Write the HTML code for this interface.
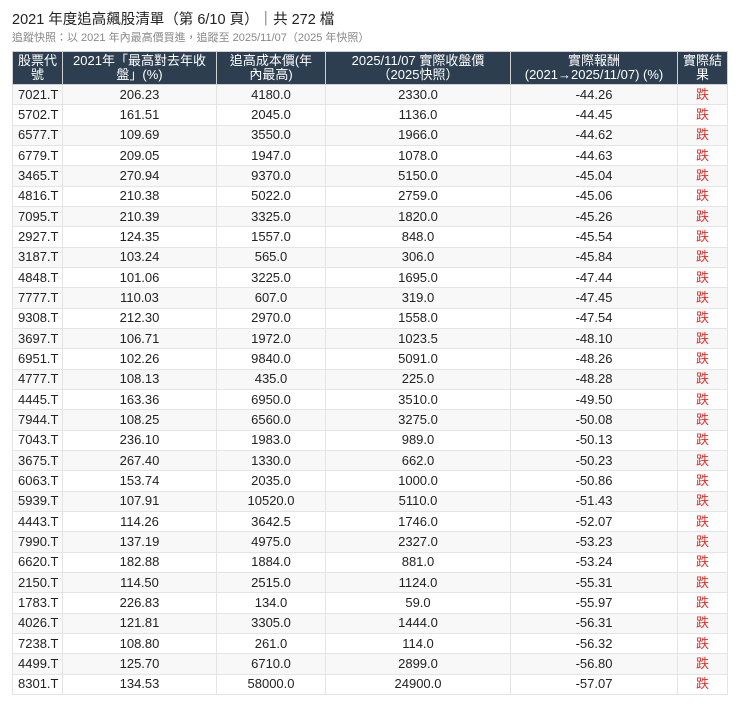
<html><head><style>
body{margin:0;background:#fff;font-family:"Liberation Sans","Noto Sans CJK TC",sans-serif;color:#222}
h1{position:absolute;left:12px;top:8px;margin:0;font-size:14.5px;font-weight:normal;color:#222}
.sub{position:absolute;left:12px;top:29px;font-size:11px;color:#888}
table{position:absolute;left:12px;top:51px;border-collapse:collapse;width:715px;table-layout:fixed;font-size:13px}
th{background:#2c3e50;color:#fff;font-weight:normal;height:33px;line-height:14px;padding:0 8px;border:1px solid #d0d0d0;font-size:13px}
tr{height:20.33px}
td{padding:0;border:1px solid #e4e4e4;text-align:center;line-height:14px}
td:first-child{text-align:left;padding-left:5px}
tr:nth-child(even) td{background:#f8f8f8}
td.r{color:#e0302a}
</style></head><body>
<h1>2021 年度追高飆股清單（第 6/10 頁）｜共 272 檔</h1>
<div class="sub">追蹤快照：以 2021 年內最高價買進，追蹤至 2025/11/07（2025 年快照）</div>
<table>
<colgroup><col style="width:50px"><col style="width:154px"><col style="width:109px"><col style="width:185px"><col style="width:167px"><col style="width:50px"></colgroup>
<tr style="height:33px"><th style="padding:0 4px">股票代號</th><th>2021年「最高對去年收盤」(%)</th><th>追高成本價(年內最高)</th><th>2025/11/07 實際收盤價（2025快照）</th><th>實際報酬<br>(2021→2025/11/07) (%)</th><th style="padding:0 4px">實際結果</th></tr>
<tr><td>7021.T</td><td>206.23</td><td>4180.0</td><td>2330.0</td><td>-44.26</td><td class="r">跌</td></tr>
<tr><td>5702.T</td><td>161.51</td><td>2045.0</td><td>1136.0</td><td>-44.45</td><td class="r">跌</td></tr>
<tr><td>6577.T</td><td>109.69</td><td>3550.0</td><td>1966.0</td><td>-44.62</td><td class="r">跌</td></tr>
<tr><td>6779.T</td><td>209.05</td><td>1947.0</td><td>1078.0</td><td>-44.63</td><td class="r">跌</td></tr>
<tr><td>3465.T</td><td>270.94</td><td>9370.0</td><td>5150.0</td><td>-45.04</td><td class="r">跌</td></tr>
<tr><td>4816.T</td><td>210.38</td><td>5022.0</td><td>2759.0</td><td>-45.06</td><td class="r">跌</td></tr>
<tr><td>7095.T</td><td>210.39</td><td>3325.0</td><td>1820.0</td><td>-45.26</td><td class="r">跌</td></tr>
<tr><td>2927.T</td><td>124.35</td><td>1557.0</td><td>848.0</td><td>-45.54</td><td class="r">跌</td></tr>
<tr><td>3187.T</td><td>103.24</td><td>565.0</td><td>306.0</td><td>-45.84</td><td class="r">跌</td></tr>
<tr><td>4848.T</td><td>101.06</td><td>3225.0</td><td>1695.0</td><td>-47.44</td><td class="r">跌</td></tr>
<tr><td>7777.T</td><td>110.03</td><td>607.0</td><td>319.0</td><td>-47.45</td><td class="r">跌</td></tr>
<tr><td>9308.T</td><td>212.30</td><td>2970.0</td><td>1558.0</td><td>-47.54</td><td class="r">跌</td></tr>
<tr><td>3697.T</td><td>106.71</td><td>1972.0</td><td>1023.5</td><td>-48.10</td><td class="r">跌</td></tr>
<tr><td>6951.T</td><td>102.26</td><td>9840.0</td><td>5091.0</td><td>-48.26</td><td class="r">跌</td></tr>
<tr><td>4777.T</td><td>108.13</td><td>435.0</td><td>225.0</td><td>-48.28</td><td class="r">跌</td></tr>
<tr><td>4445.T</td><td>163.36</td><td>6950.0</td><td>3510.0</td><td>-49.50</td><td class="r">跌</td></tr>
<tr><td>7944.T</td><td>108.25</td><td>6560.0</td><td>3275.0</td><td>-50.08</td><td class="r">跌</td></tr>
<tr><td>7043.T</td><td>236.10</td><td>1983.0</td><td>989.0</td><td>-50.13</td><td class="r">跌</td></tr>
<tr><td>3675.T</td><td>267.40</td><td>1330.0</td><td>662.0</td><td>-50.23</td><td class="r">跌</td></tr>
<tr><td>6063.T</td><td>153.74</td><td>2035.0</td><td>1000.0</td><td>-50.86</td><td class="r">跌</td></tr>
<tr><td>5939.T</td><td>107.91</td><td>10520.0</td><td>5110.0</td><td>-51.43</td><td class="r">跌</td></tr>
<tr><td>4443.T</td><td>114.26</td><td>3642.5</td><td>1746.0</td><td>-52.07</td><td class="r">跌</td></tr>
<tr><td>7990.T</td><td>137.19</td><td>4975.0</td><td>2327.0</td><td>-53.23</td><td class="r">跌</td></tr>
<tr><td>6620.T</td><td>182.88</td><td>1884.0</td><td>881.0</td><td>-53.24</td><td class="r">跌</td></tr>
<tr><td>2150.T</td><td>114.50</td><td>2515.0</td><td>1124.0</td><td>-55.31</td><td class="r">跌</td></tr>
<tr><td>1783.T</td><td>226.83</td><td>134.0</td><td>59.0</td><td>-55.97</td><td class="r">跌</td></tr>
<tr><td>4026.T</td><td>121.81</td><td>3305.0</td><td>1444.0</td><td>-56.31</td><td class="r">跌</td></tr>
<tr><td>7238.T</td><td>108.80</td><td>261.0</td><td>114.0</td><td>-56.32</td><td class="r">跌</td></tr>
<tr><td>4499.T</td><td>125.70</td><td>6710.0</td><td>2899.0</td><td>-56.80</td><td class="r">跌</td></tr>
<tr><td>8301.T</td><td>134.53</td><td>58000.0</td><td>24900.0</td><td>-57.07</td><td class="r">跌</td></tr>
</table>
</body></html>
